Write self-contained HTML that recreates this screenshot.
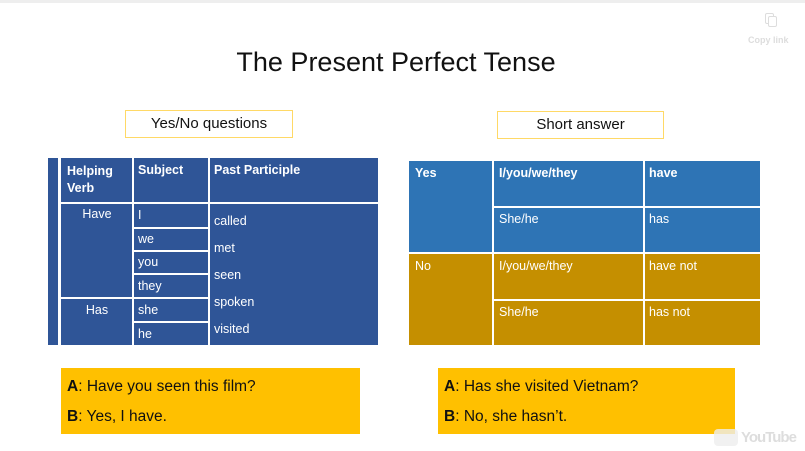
<!DOCTYPE html>
<html><head><style>
body{margin:0;width:805px;height:451px;background:#fff;position:relative;overflow:hidden;font-family:"Liberation Sans",sans-serif}
div{position:absolute;box-sizing:border-box}
.w{color:#fff;font-size:12.5px}
.b{font-weight:bold}
.L{background:#2f5597}
.Y{background:#2e74b5}
.G{background:#c58f00}
.t{color:#111;font-size:15.5px;line-height:20px}
</style></head><body>
<div style="left:0;top:0;width:805px;height:3px;background:#eee"></div>
<div style="left:0;top:47px;width:792px;text-align:center;font-size:27px;color:#111">The Present Perfect Tense</div>
<div style="left:125px;top:110px;width:168px;height:28px;border:1.5px solid #ffd966;text-align:center;font-size:15px;line-height:25px;color:#111">Yes/No questions</div>
<div style="left:497px;top:111px;width:167px;height:28px;border:1.5px solid #ffd966;text-align:center;font-size:15px;line-height:25px;color:#111">Short answer</div>

<!-- left table -->
<div class="L" style="left:48px;top:158px;width:10px;height:187px"></div>
<div class="L" style="left:61px;top:158px;width:317px;height:187px"></div>
<div style="left:61px;top:202px;width:317px;height:2px;background:#fff"></div>
<div style="left:132px;top:158px;width:1.5px;height:187px;background:#fff"></div>
<div style="left:208px;top:158px;width:1.5px;height:187px;background:#fff"></div>
<div style="left:61px;top:297px;width:72px;height:1.5px;background:#fff"></div>
<div style="left:132px;top:227px;width:77px;height:1.5px;background:#fff"></div>
<div style="left:132px;top:250px;width:77px;height:1.5px;background:#fff"></div>
<div style="left:132px;top:273px;width:77px;height:1.5px;background:#fff"></div>
<div style="left:132px;top:297px;width:77px;height:1.5px;background:#fff"></div>
<div style="left:132px;top:321px;width:77px;height:1.5px;background:#fff"></div>
<div class="w b" style="left:67px;top:163px;line-height:17px">Helping<br>Verb</div>
<div class="w b" style="left:138px;top:163px">Subject</div>
<div class="w b" style="left:214px;top:163px">Past Participle</div>
<div class="w" style="left:61px;top:207px;width:72px;text-align:center">Have</div>
<div class="w" style="left:61px;top:303px;width:72px;text-align:center">Has</div>
<div class="w" style="left:138px;top:208px">I</div>
<div class="w" style="left:138px;top:232px">we</div>
<div class="w" style="left:138px;top:255px">you</div>
<div class="w" style="left:138px;top:279px">they</div>
<div class="w" style="left:138px;top:303px">she</div>
<div class="w" style="left:138px;top:327px">he</div>
<div class="w" style="left:214px;top:214px">called</div>
<div class="w" style="left:214px;top:241px">met</div>
<div class="w" style="left:214px;top:268px">seen</div>
<div class="w" style="left:214px;top:295px">spoken</div>
<div class="w" style="left:214px;top:322px">visited</div>

<!-- right table -->
<div class="Y" style="left:409px;top:161px;width:351px;height:92px"></div>
<div class="G" style="left:409px;top:253px;width:351px;height:92px"></div>
<div style="left:492px;top:161px;width:1.5px;height:184px;background:#fff"></div>
<div style="left:643px;top:161px;width:1.5px;height:184px;background:#fff"></div>
<div style="left:492px;top:206px;width:268px;height:2px;background:#fff"></div>
<div style="left:409px;top:252px;width:351px;height:1.5px;background:#fff"></div>
<div style="left:492px;top:299px;width:268px;height:1.5px;background:#fff"></div>
<div class="w b" style="left:415px;top:166px">Yes</div>
<div class="w b" style="left:499px;top:166px">I/you/we/they</div>
<div class="w b" style="left:649px;top:166px">have</div>
<div class="w" style="left:499px;top:212px">She/he</div>
<div class="w" style="left:649px;top:212px">has</div>
<div class="w" style="left:415px;top:259px">No</div>
<div class="w" style="left:499px;top:259px">I/you/we/they</div>
<div class="w" style="left:649px;top:259px">have not</div>
<div class="w" style="left:499px;top:305px">She/he</div>
<div class="w" style="left:649px;top:305px">has not</div>

<!-- bottom boxes -->
<div style="left:61px;top:368px;width:299px;height:66px;background:#ffc000"></div>
<div class="t" style="left:67px;top:377px"><b>A</b>: Have you seen this film?</div>
<div class="t" style="left:67px;top:407px"><b>B</b>: Yes, I have.</div>
<div style="left:438px;top:368px;width:297px;height:66px;background:#ffc000"></div>
<div class="t" style="left:444px;top:377px"><b>A</b>: Has she visited Vietnam?</div>
<div class="t" style="left:444px;top:407px"><b>B</b>: No, she hasn’t.</div>

<!-- overlays -->
<div style="left:765px;top:13px;width:9px;height:11px;border:1.5px solid #ddd;border-radius:2px"></div>
<div style="left:768px;top:16px;width:9px;height:11px;border:1.5px solid #ddd;border-radius:2px;background:#fff"></div>
<div style="left:748px;top:35px;font-size:9px;color:#ddd;font-weight:bold">Copy link</div>
<div style="left:714px;top:429px;width:24px;height:17px;background:#eee;border-radius:4px;opacity:.8"></div>
<div style="left:741px;top:429px;font-size:15px;color:#ddd;font-weight:bold;letter-spacing:-1px">YouTube</div>
</body></html>
